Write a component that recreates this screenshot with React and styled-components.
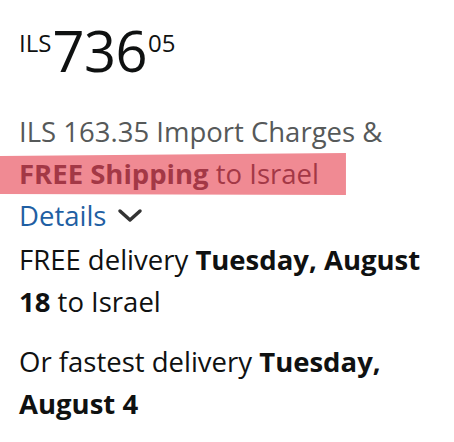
import React from "react";
import styled, { createGlobalStyle } from "styled-components";

const Global = createGlobalStyle`
  html, body { margin: 0; padding: 0; background: #fff; }
  body { font-family: "Open Sans", "Noto Sans", Arial, sans-serif; }
`;

const Panel = styled.div`
  padding: 22px 24px 0 19px;
  color: #0f1111;
`;

const Price = styled.div`
  display: flex;
  align-items: flex-start;
  line-height: 1;
  height: 89px;
`;

const Sup = styled.span`
  font-size: 24px;
  line-height: 1;
  margin-top: 9px;
`;

const Whole = styled.span`
  font-size: 56px;
  line-height: 1;
  letter-spacing: -0.5px;
  margin: 0 1px;
`;

const Line = styled.div`
  font-size: 27.5px;
  line-height: 42px;
  color: ${(p) => p.$color || "#0f1111"};
`;

const Highlight = styled.span`
  display: inline-block;
  color: #a33846;
  margin-left: -19px;
  padding: 0 27px 0 19px;
  line-height: 42px;
  background: #f08a93;
  clip-path: polygon(0 3px, 100% 0, 100% 100%, 0 calc(100% - 1px));
`;

const Link = styled.a`
  color: #1f5fa3;
  text-decoration: none;
  display: inline-flex;
  align-items: center;
  gap: 11px;
`;

const Block = styled.div`
  margin-top: ${(p) => p.$gap || 0}px;
`;

export default function App() {
  return (
    <>
      <Global />
      <Panel>
        <Price>
          <Sup>ILS</Sup>
          <Whole>736</Whole>
          <Sup>05</Sup>
        </Price>
        <Line $color="#565959">ILS 163.35 Import Charges &amp;</Line>
        <Line>
          <Highlight>
            <b>FREE Shipping</b> to Israel
          </Highlight>
        </Line>
        <Line>
          <Link href="#">
            Details
            <svg width="26" height="18" viewBox="0 0 26 18">
              <polyline
                points="3,4 13,13 23,4"
                fill="none"
                stroke="#333"
                strokeWidth="3.5"
                strokeLinecap="round"
                strokeLinejoin="round"
              />
            </svg>
          </Link>
        </Line>
        <Block $gap={2}>
          <Line>
            FREE delivery <b>Tuesday, August 18</b> to Israel
          </Line>
        </Block>
        <Block $gap={18}>
          <Line>
            Or fastest delivery <b>Tuesday, August 4</b>
          </Line>
        </Block>
      </Panel>
    </>
  );
}
